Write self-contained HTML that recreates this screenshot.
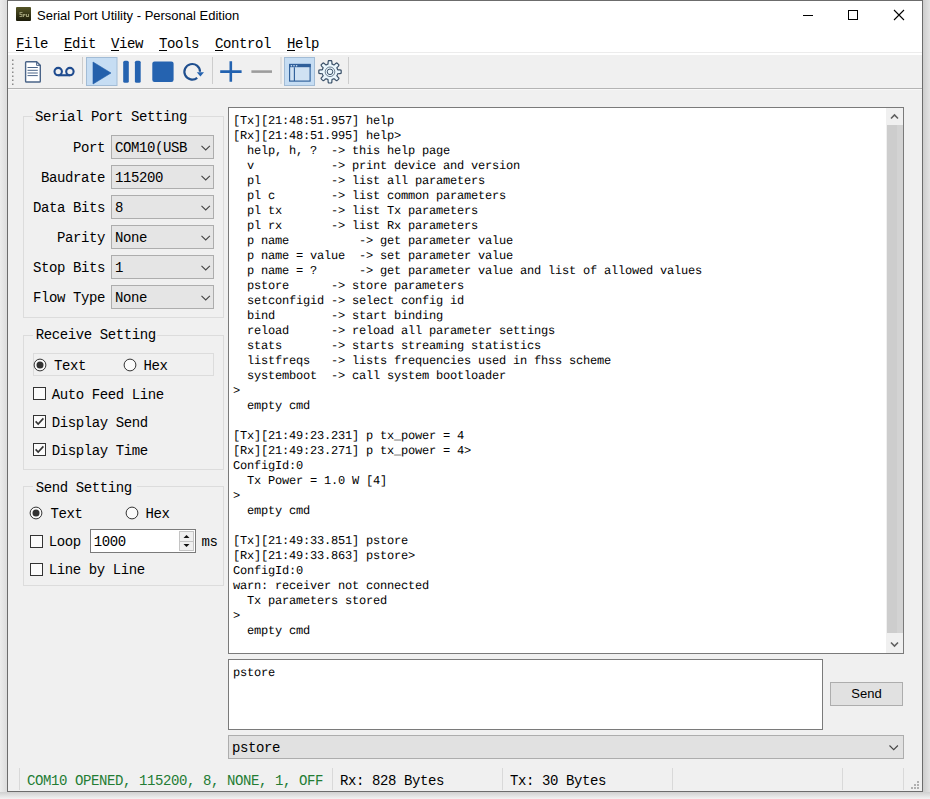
<!DOCTYPE html>
<html><head><meta charset="utf-8">
<style>
*{margin:0;padding:0;box-sizing:border-box}
html,body{width:930px;height:799px;overflow:hidden;background:#f3f3f3;position:relative}
.a{position:absolute}
.m{font-family:"Liberation Mono",monospace;font-size:14px;letter-spacing:-0.4px;line-height:16px;color:#000;white-space:pre}
.s{font-family:"Liberation Mono",monospace;font-size:12px;letter-spacing:-0.2px;text-rendering:geometricPrecision;line-height:15px;color:#000;white-space:pre}
.sans{font-family:"Liberation Sans",sans-serif;font-size:13px;line-height:16px;color:#000;white-space:pre}
.u{text-decoration:underline;text-underline-offset:2px}
#win{left:7px;top:0;width:916px;height:792px;border:1px solid #6c6c6c;background:#f0f0f0}
.grp{border:1px solid #dcdcdc}
.gt{background:#f0f0f0;padding:0 2px}
.combo{background:#e5e5e5;border:1px solid #adadad}
.chev{position:absolute;width:6px;height:6px;border-right:1.2px solid #333;border-bottom:1.2px solid #333;transform:rotate(45deg)}
.cb{width:13px;height:13px;border:1px solid #333;background:#fff}
.rb{width:13px;height:13px;border:1px solid #333;border-radius:50%;background:#fff}
.sep{width:1px;background:#d5d5d5}
</style></head><body>
<!-- shadow strips -->
<div class="a" style="left:0;top:0;width:7px;height:799px;background:linear-gradient(to right,#ececec,#dcdcdc)"></div>
<div class="a" style="left:923px;top:0;width:7px;height:799px;background:linear-gradient(to right,#cdcdcd,#e3e3e3)"></div>
<div class="a" style="left:0;top:792px;width:930px;height:7px;background:linear-gradient(to bottom,#d0d0d0,#f3f3f3)"></div>

<div id="win" class="a"></div>
<!-- title bar + menu -->
<div class="a" style="left:8px;top:1px;width:914px;height:54px;background:#fff"></div>
<svg class="a" style="left:16px;top:7px" width="15" height="14"><defs><linearGradient id="ig" x1="0" y1="0" x2="0" y2="1"><stop offset="0" stop-color="#555526"/><stop offset="1" stop-color="#1b1b09"/></linearGradient></defs><rect x="0" y="0" width="15" height="14" rx="1" fill="url(#ig)"/><g fill="#9a9a72"><path d="M3.5 5h3v1h-2v1h2v3h-3v-1h2v-1h-2z"/><path d="M7 7h2.5v1.6H8v1.4H7z"/><path d="M10 7h1v2h1v-2h1v3h-3z"/></g></svg>
<div class="a sans" style="left:37px;top:8px">Serial Port Utility - Personal Edition</div>
<div class="a" style="left:803px;top:15px;width:10px;height:1px;background:#000"></div>
<div class="a" style="left:848px;top:10px;width:10px;height:10px;border:1px solid #000"></div>
<svg class="a" style="left:893px;top:9px" width="12" height="12"><path d="M1 1L11 11M11 1L1 11" stroke="#000" stroke-width="1.1"/></svg>

<div class="a m" style="left:16px;top:36px"><span class="u">F</span>ile</div>
<div class="a m" style="left:64px;top:36px"><span class="u">E</span>dit</div>
<div class="a m" style="left:111px;top:36px"><span class="u">V</span>iew</div>
<div class="a m" style="left:159px;top:36px"><span class="u">T</span>ools</div>
<div class="a m" style="left:215px;top:36px"><span class="u">C</span>ontrol</div>
<div class="a m" style="left:287px;top:36px"><span class="u">H</span>elp</div>

<!-- toolbar -->
<div class="a" style="left:8px;top:52px;width:914px;height:1px;background:#ececec"></div><div class="a" style="left:8px;top:56px;width:914px;height:33px;background:#f0f0f0;border-bottom:1px solid #b4b4b4"></div><div class="a" style="left:8px;top:89px;width:914px;height:1px;background:#f8f8f8"></div>
<svg class="a" style="left:0;top:0" width="360" height="92" viewBox="0 0 360 92">
<g fill="#8a8a8a">
<rect x="12" y="59.5" width="1.5" height="1.5"/><rect x="12" y="63.5" width="1.5" height="1.5"/><rect x="12" y="67.5" width="1.5" height="1.5"/><rect x="12" y="71.5" width="1.5" height="1.5"/><rect x="12" y="75.5" width="1.5" height="1.5"/><rect x="12" y="79.5" width="1.5" height="1.5"/><rect x="12" y="83.5" width="1.5" height="1.5"/>
</g>
<path d="M25.6 62.5Q25.6 61.7 26.4 61.7H36.6L40.3 65.4V81.2Q40.3 82 39.5 82H26.4Q25.6 82 25.6 81.2Z" fill="#fff" stroke="#4a6488" stroke-width="1.4"/>
<path d="M36.6 61.7V65.4H40.3" fill="none" stroke="#4a6488" stroke-width="1"/>
<g stroke="#4a6488" stroke-width="1"><path d="M27.5 67.5H37.8M27.5 70.3H37.8M27.5 73H37.8M27.5 75.6H37.8"/></g>
<g fill="none" stroke="#1f4b8f" stroke-width="2.1"><circle cx="58.2" cy="71.55" r="3.7"/><circle cx="69.9" cy="71.55" r="3.7"/><path d="M58.2 75.25H69.9"/></g>
<g fill="#cdcdcd"><rect x="82" y="57" width="1" height="27"/><rect x="212" y="57" width="1" height="27"/><rect x="280.5" y="57" width="1" height="27"/><rect x="348" y="57" width="1" height="27"/></g>
<rect x="86.5" y="57.5" width="30.5" height="28" fill="#c6ddf3" stroke="#a2bcd6" stroke-width="1"/>
<path d="M93 62L111 73L93 84Z" fill="#2460ab" stroke="#2460ab" stroke-width="0.6" stroke-linejoin="round"/>
<g fill="#2563b0"><rect x="123.2" y="60.7" width="5.6" height="22.1" rx="1.6"/><rect x="134.9" y="60.7" width="5.8" height="22.1" rx="1.6"/><rect x="152.3" y="61.5" width="21.3" height="20.5" rx="2.2"/></g>
<path d="M200 71.8A7.8 7.8 0 1 0 197.2 77.8" fill="none" stroke="#1f4f8f" stroke-width="2.2"/>
<path d="M196.8 72.2H204L200.4 76.6Z" fill="#2563b0"/>
<g stroke="#2262b0" stroke-width="2.6"><path d="M220.2 71.6H241.6M230.8 61.3V81.8"/></g>
<path d="M251.4 71.6H272" stroke="#9c9c9c" stroke-width="2.6"/>
<rect x="284.5" y="57.5" width="30" height="28" fill="#c6ddf3" stroke="#a2bcd6" stroke-width="1"/>
<rect x="289.6" y="64.5" width="20.5" height="16.6" fill="#d0e2f3" stroke="#2f5f9a" stroke-width="1.15"/>
<rect x="289" y="63.9" width="21.7" height="3.3" fill="#2f5f9a"/>
<g fill="#cfe3f7"><circle cx="291.4" cy="65.7" r="0.8"/><circle cx="294" cy="65.7" r="0.8"/><circle cx="296.6" cy="65.7" r="0.8"/></g>
<path d="M294.4 67.2V81" stroke="#2f5f9a" stroke-width="1.15"/>
<path d="M341.20 71.80 L341.20 72.09 L341.18 72.39 L341.17 72.68 L341.14 72.97 L341.10 73.26 L340.77 73.51 L339.99 73.65 L339.00 73.71 L338.14 73.75 L337.66 73.85 L337.57 74.04 L337.51 74.24 L337.45 74.44 L337.38 74.63 L337.30 74.82 L337.22 75.01 L337.13 75.20 L337.04 75.39 L336.94 75.57 L336.87 75.76 L337.13 76.17 L337.72 76.81 L338.37 77.55 L338.82 78.21 L338.89 78.62 L338.70 78.85 L338.52 79.07 L338.32 79.29 L338.12 79.51 L337.92 79.72 L337.71 79.92 L337.49 80.12 L337.27 80.32 L337.05 80.50 L336.82 80.69 L336.41 80.62 L335.75 80.17 L335.01 79.52 L334.37 78.93 L333.96 78.67 L333.77 78.74 L333.59 78.84 L333.40 78.93 L333.21 79.02 L333.02 79.10 L332.83 79.18 L332.64 79.25 L332.44 79.31 L332.24 79.37 L332.05 79.46 L331.95 79.94 L331.91 80.80 L331.85 81.79 L331.71 82.57 L331.46 82.90 L331.17 82.94 L330.88 82.97 L330.59 82.98 L330.29 83.00 L330.00 83.00 L329.71 83.00 L329.41 82.98 L329.12 82.97 L328.83 82.94 L328.54 82.90 L328.29 82.57 L328.15 81.79 L328.09 80.80 L328.05 79.94 L327.95 79.46 L327.76 79.37 L327.56 79.31 L327.36 79.25 L327.17 79.18 L326.98 79.10 L326.79 79.02 L326.60 78.93 L326.41 78.84 L326.23 78.74 L326.04 78.67 L325.63 78.93 L324.99 79.52 L324.25 80.17 L323.59 80.62 L323.18 80.69 L322.95 80.50 L322.73 80.32 L322.51 80.12 L322.29 79.92 L322.08 79.72 L321.88 79.51 L321.68 79.29 L321.48 79.07 L321.30 78.85 L321.11 78.62 L321.18 78.21 L321.63 77.55 L322.28 76.81 L322.87 76.17 L323.13 75.76 L323.06 75.57 L322.96 75.39 L322.87 75.20 L322.78 75.01 L322.70 74.82 L322.62 74.63 L322.55 74.44 L322.49 74.24 L322.43 74.04 L322.34 73.85 L321.86 73.75 L321.00 73.71 L320.01 73.65 L319.23 73.51 L318.90 73.26 L318.86 72.97 L318.83 72.68 L318.82 72.39 L318.80 72.09 L318.80 71.80 L318.80 71.51 L318.82 71.21 L318.83 70.92 L318.86 70.63 L318.90 70.34 L319.23 70.09 L320.01 69.95 L321.00 69.89 L321.86 69.85 L322.34 69.75 L322.43 69.56 L322.49 69.36 L322.55 69.16 L322.62 68.97 L322.70 68.78 L322.78 68.59 L322.87 68.40 L322.96 68.21 L323.06 68.03 L323.13 67.84 L322.87 67.43 L322.28 66.79 L321.63 66.05 L321.18 65.39 L321.11 64.98 L321.30 64.75 L321.48 64.53 L321.68 64.31 L321.88 64.09 L322.08 63.88 L322.29 63.68 L322.51 63.48 L322.73 63.28 L322.95 63.10 L323.18 62.91 L323.59 62.98 L324.25 63.43 L324.99 64.08 L325.63 64.67 L326.04 64.93 L326.23 64.86 L326.41 64.76 L326.60 64.67 L326.79 64.58 L326.98 64.50 L327.17 64.42 L327.36 64.35 L327.56 64.29 L327.76 64.23 L327.95 64.14 L328.05 63.66 L328.09 62.80 L328.15 61.81 L328.29 61.03 L328.54 60.70 L328.83 60.66 L329.12 60.63 L329.41 60.62 L329.71 60.60 L330.00 60.60 L330.29 60.60 L330.59 60.62 L330.88 60.63 L331.17 60.66 L331.46 60.70 L331.71 61.03 L331.85 61.81 L331.91 62.80 L331.95 63.66 L332.05 64.14 L332.24 64.23 L332.44 64.29 L332.64 64.35 L332.83 64.42 L333.02 64.50 L333.21 64.58 L333.40 64.67 L333.59 64.76 L333.77 64.86 L333.96 64.93 L334.37 64.67 L335.01 64.08 L335.75 63.43 L336.41 62.98 L336.82 62.91 L337.05 63.10 L337.27 63.28 L337.49 63.48 L337.71 63.68 L337.92 63.88 L338.12 64.09 L338.32 64.31 L338.52 64.53 L338.70 64.75 L338.89 64.98 L338.82 65.39 L338.37 66.05 L337.72 66.79 L337.13 67.43 L336.87 67.84 L336.94 68.03 L337.04 68.21 L337.13 68.40 L337.22 68.59 L337.30 68.78 L337.38 68.97 L337.45 69.16 L337.51 69.36 L337.57 69.56 L337.66 69.75 L338.14 69.85 L339.00 69.89 L339.99 69.95 L340.77 70.09 L341.10 70.34 L341.14 70.63 L341.17 70.92 L341.18 71.21 L341.20 71.51Z" fill="#eaf6fc" stroke="#3a5068" stroke-width="1.2" stroke-linejoin="round"/><circle cx="330" cy="71.8" r="4.8" fill="none" stroke="#4a5f75" stroke-width="0.8"/><circle cx="330" cy="71.8" r="2.8" fill="none" stroke="#3a5068" stroke-width="1"/>
</svg>

<!-- left panel -->
<div class="a grp" style="left:23px;top:116px;width:201px;height:202px"></div>
<div class="a" style="left:33px;top:110px;width:156px;height:12px;background:#f0f0f0"></div>
<div class="a m" style="left:35px;top:109.08px">Serial Port Setting</div>
<div class="a m" style="left:-15px;width:120px;text-align:right;top:139.98px">Port</div>
<div class="a combo" style="left:111px;top:135px;width:103px;height:24px"></div>
<div class="a m" style="left:115px;top:139.98px">COM10(USB</div>
<svg class="a" style="left:200px;top:144px" width="11" height="7"><path d="M1.5 1.8L5.7 6L9.9 1.8" fill="none" stroke="#444" stroke-width="1.1"/></svg>
<div class="a m" style="left:-15px;width:120px;text-align:right;top:169.98px">Baudrate</div>
<div class="a combo" style="left:111px;top:165px;width:103px;height:24px"></div>
<div class="a m" style="left:115px;top:169.98px">115200</div>
<svg class="a" style="left:200px;top:174px" width="11" height="7"><path d="M1.5 1.8L5.7 6L9.9 1.8" fill="none" stroke="#444" stroke-width="1.1"/></svg>
<div class="a m" style="left:-15px;width:120px;text-align:right;top:199.98px">Data Bits</div>
<div class="a combo" style="left:111px;top:195px;width:103px;height:24px"></div>
<div class="a m" style="left:115px;top:199.98px">8</div>
<svg class="a" style="left:200px;top:204px" width="11" height="7"><path d="M1.5 1.8L5.7 6L9.9 1.8" fill="none" stroke="#444" stroke-width="1.1"/></svg>
<div class="a m" style="left:-15px;width:120px;text-align:right;top:229.98px">Parity</div>
<div class="a combo" style="left:111px;top:225px;width:103px;height:24px"></div>
<div class="a m" style="left:115px;top:229.98px">None</div>
<svg class="a" style="left:200px;top:234px" width="11" height="7"><path d="M1.5 1.8L5.7 6L9.9 1.8" fill="none" stroke="#444" stroke-width="1.1"/></svg>
<div class="a m" style="left:-15px;width:120px;text-align:right;top:259.98px">Stop Bits</div>
<div class="a combo" style="left:111px;top:255px;width:103px;height:24px"></div>
<div class="a m" style="left:115px;top:259.98px">1</div>
<svg class="a" style="left:200px;top:264px" width="11" height="7"><path d="M1.5 1.8L5.7 6L9.9 1.8" fill="none" stroke="#444" stroke-width="1.1"/></svg>
<div class="a m" style="left:-15px;width:120px;text-align:right;top:289.98px">Flow Type</div>
<div class="a combo" style="left:111px;top:285px;width:103px;height:24px"></div>
<div class="a m" style="left:115px;top:289.98px">None</div>
<svg class="a" style="left:200px;top:294px" width="11" height="7"><path d="M1.5 1.8L5.7 6L9.9 1.8" fill="none" stroke="#444" stroke-width="1.1"/></svg>
<div class="a grp" style="left:23px;top:335px;width:201px;height:135px"></div>
<div class="a" style="left:33px;top:328px;width:124px;height:12px;background:#f0f0f0"></div>
<div class="a m" style="left:35.8px;top:327.28px">Receive Setting</div>
<div class="a grp" style="left:33px;top:353px;width:181px;height:23px"></div>
<svg class="a" style="left:33.3px;top:357.5px" width="14" height="14"><circle cx="7" cy="7" r="5.9" fill="#fbfbfb" stroke="#333" stroke-width="1"/><circle cx="7" cy="7" r="3.5" fill="#333"/></svg>
<div class="a m" style="left:54px;top:358.28px">Text</div>
<svg class="a" style="left:123.19999999999999px;top:357.5px" width="14" height="14"><circle cx="7" cy="7" r="5.9" fill="#fbfbfb" stroke="#333" stroke-width="1"/></svg>
<div class="a m" style="left:143.5px;top:358.28px">Hex</div>
<svg class="a" style="left:33px;top:387px" width="13" height="13"><rect x="0.5" y="0.5" width="12" height="12" fill="#fbfbfb" stroke="#333" stroke-width="1"/></svg>
<div class="a m" style="left:51.7px;top:386.98px">Auto Feed Line</div>
<svg class="a" style="left:33px;top:415px" width="13" height="13"><rect x="0.5" y="0.5" width="12" height="12" fill="#fbfbfb" stroke="#333" stroke-width="1"/><path d="M2.6 6.4L5.2 9.1L10.4 3.4" fill="none" stroke="#333" stroke-width="1.6"/></svg>
<div class="a m" style="left:51.7px;top:414.98px">Display Send</div>
<svg class="a" style="left:33px;top:443px" width="13" height="13"><rect x="0.5" y="0.5" width="12" height="12" fill="#fbfbfb" stroke="#333" stroke-width="1"/><path d="M2.6 6.4L5.2 9.1L10.4 3.4" fill="none" stroke="#333" stroke-width="1.6"/></svg>
<div class="a m" style="left:51.7px;top:442.98px">Display Time</div>
<div class="a grp" style="left:23px;top:486px;width:201px;height:100px"></div>
<div class="a" style="left:33px;top:480px;width:104px;height:12px;background:#f0f0f0"></div>
<div class="a m" style="left:35.8px;top:480.08px">Send Setting</div>
<svg class="a" style="left:29.299999999999997px;top:506px" width="14" height="14"><circle cx="7" cy="7" r="5.9" fill="#fbfbfb" stroke="#333" stroke-width="1"/><circle cx="7" cy="7" r="3.5" fill="#333"/></svg>
<div class="a m" style="left:50.5px;top:505.78px">Text</div>
<svg class="a" style="left:125px;top:506px" width="14" height="14"><circle cx="7" cy="7" r="5.9" fill="#fbfbfb" stroke="#333" stroke-width="1"/></svg>
<div class="a m" style="left:145.6px;top:505.78px">Hex</div>
<svg class="a" style="left:30px;top:535px" width="13" height="13"><rect x="0.5" y="0.5" width="12" height="12" fill="#fbfbfb" stroke="#333" stroke-width="1"/></svg>
<div class="a m" style="left:48.8px;top:534.48px">Loop</div>
<div class="a" style="left:90px;top:529px;width:106px;height:24px;background:#fff;border:1px solid #7a7a7a"></div>
<div class="a m" style="left:93.8px;top:534.48px">1000</div>
<svg class="a" style="left:179px;top:531px" width="15" height="20"><rect x="0.5" y="0.5" width="14" height="19" fill="#f0f0f0" stroke="#c4c4c4"/><path d="M0.5 10.5H14.5" stroke="#c4c4c4"/><path d="M4.5 7L7.5 4L10.5 7Z" fill="#111"/><path d="M4.5 13L7.5 16L10.5 13Z" fill="#111"/></svg>
<div class="a m" style="left:201.5px;top:533.88px">ms</div>
<svg class="a" style="left:30px;top:562.5px" width="13" height="13"><rect x="0.5" y="0.5" width="12" height="12" fill="#fbfbfb" stroke="#333" stroke-width="1"/></svg>
<div class="a m" style="left:48.8px;top:562.28px">Line by Line</div>

<!-- output text area -->
<div class="a" style="left:228px;top:107px;width:676px;height:547px;background:#fff;border:1px solid #7a7a7a"></div>
<div class="a s" style="left:233px;top:114.3px">[Tx][21:48:51.957] help
[Rx][21:48:51.995] help&gt;
  help, h, ?  -&gt; this help page
  v           -&gt; print device and version
  pl          -&gt; list all parameters
  pl c        -&gt; list common parameters
  pl tx       -&gt; list Tx parameters
  pl rx       -&gt; list Rx parameters
  p name          -&gt; get parameter value
  p name = value  -&gt; set parameter value
  p name = ?      -&gt; get parameter value and list of allowed values
  pstore      -&gt; store parameters
  setconfigid -&gt; select config id
  bind        -&gt; start binding
  reload      -&gt; reload all parameter settings
  stats       -&gt; starts streaming statistics
  listfreqs   -&gt; lists frequencies used in fhss scheme
  systemboot  -&gt; call system bootloader
&gt;
  empty cmd

[Tx][21:49:23.231] p tx_power = 4
[Rx][21:49:23.271] p tx_power = 4&gt;
ConfigId:0
  Tx Power = 1.0 W [4]
&gt;
  empty cmd

[Tx][21:49:33.851] pstore
[Rx][21:49:33.863] pstore&gt;
ConfigId:0
warn: receiver not connected
  Tx parameters stored
&gt;
  empty cmd</div>
<div class="a" style="left:886px;top:108px;width:17px;height:545px;background:#f0f0f0"></div>
<div class="a" style="left:887px;top:125px;width:16px;height:508px;background:linear-gradient(to right,#cdcdcd 0,#cdcdcd 10px,#d3d3d3 10px)"></div>
<svg class="a" style="left:886px;top:108px" width="17" height="17"><path d="M5 10.5L8.5 7L12 10.5" fill="none" stroke="#606060" stroke-width="1.6"/></svg>
<svg class="a" style="left:886px;top:636px" width="17" height="17"><path d="M5 6.5L8.5 10L12 6.5" fill="none" stroke="#606060" stroke-width="1.6"/></svg>
<div class="a" style="left:228px;top:659px;width:595px;height:71px;background:#fff;border:1px solid #7a7a7a"></div>
<div class="a s" style="left:233px;top:666.1px">pstore</div>
<div class="a" style="left:830px;top:682px;width:73px;height:24px;background:#e1e1e1;border:1px solid #adadad"></div>
<div class="a sans" style="left:830px;width:73px;text-align:center;top:685.6px">Send</div>
<div class="a" style="left:228px;top:735px;width:676px;height:24px;background:#e1e1e1;border:1px solid #adadad"></div>
<div class="a m" style="left:232px;top:740.18px">pstore</div>
<svg class="a" style="left:888px;top:744px" width="12" height="8"><path d="M1.5 1.5L5.7 5.7L9.9 1.5" fill="none" stroke="#444" stroke-width="1.1"/></svg>

<!-- status -->
<div class="a" style="left:19px;top:768px;width:1px;height:22px;background:#d9d9d9"></div>
<div class="a" style="left:332px;top:768px;width:1px;height:22px;background:#d9d9d9"></div>
<div class="a" style="left:502px;top:768px;width:1px;height:22px;background:#d9d9d9"></div>
<div class="a" style="left:672px;top:768px;width:1px;height:22px;background:#d9d9d9"></div>
<div class="a" style="left:842px;top:768px;width:1px;height:22px;background:#d9d9d9"></div>
<div class="a" style="left:903px;top:768px;width:1px;height:22px;background:#d9d9d9"></div>
<div class="a m" style="left:27px;top:773.28px;color:#237c34">COM10 OPENED, 115200, 8, NONE, 1, OFF</div>
<div class="a m" style="left:340px;top:773.28px">Rx: 828 Bytes</div>
<div class="a m" style="left:510px;top:773.28px">Tx: 30 Bytes</div>
<svg class="a" style="left:908px;top:779px" width="14" height="13"><g fill="#b0b0b0"><rect x="9" y="2" width="2" height="2"/><rect x="6" y="5" width="2" height="2"/><rect x="9" y="5" width="2" height="2"/><rect x="3" y="8" width="2" height="2"/><rect x="6" y="8" width="2" height="2"/><rect x="9" y="8" width="2" height="2"/></g></svg>
</body></html>
